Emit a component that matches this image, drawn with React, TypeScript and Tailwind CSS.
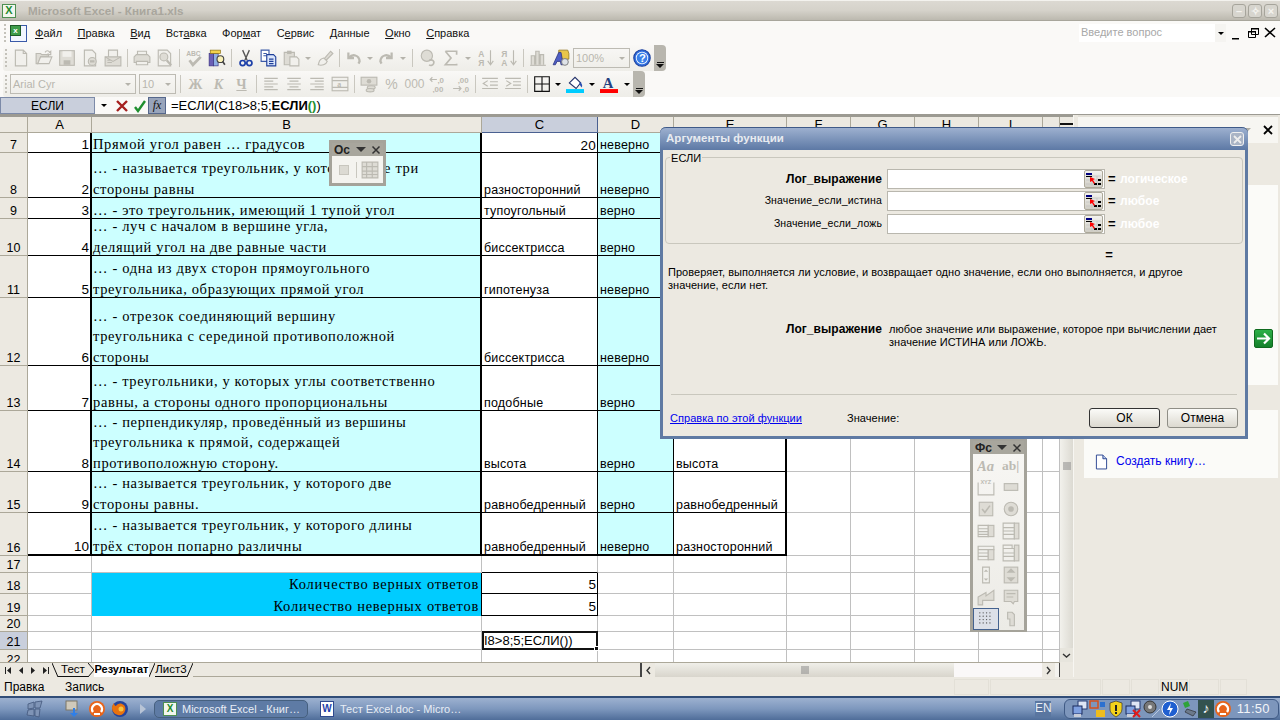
import type { ReactNode } from "react";

const G = "#bcbab2";
const F = "#dedcd5";
const L = "#f1f0ec";

const Ic = ({ children, w = 18 }: { children: ReactNode; w?: number }) => (
  <svg width={w} height={w} viewBox="0 0 16 16" shapeRendering="geometricPrecision">
    {children}
  </svg>
);

const icons: Record<string, ReactNode> = {
  new: (
    <>
      <path d="M3 1h7l3 3v11H3z" fill={L} stroke={G} />
      <path d="M10 1v3h3" fill="none" stroke={G} />
    </>
  ),
  open: (
    <>
      <path d="M1 13V4h4l1 1h6v2H5l-2.500 6z" fill={F} stroke={G} />
      <path d="M2.500 13h10L15 7H5z" fill={L} stroke={G} />
      <path d="M9 3c1-2 3-2 4 0l1-1v3h-3l1-1" fill="none" stroke={G} />
    </>
  ),
  save: (
    <>
      <rect x="1.500" y="1.500" width="13" height="13" fill={F} stroke={G} />
      <rect x="4" y="2" width="8" height="5" fill={L} />
      <rect x="5" y="10" width="6" height="4" fill={G} />
    </>
  ),
  perm: (
    <>
      <path d="M3 1h7l3 3v11H3z" fill={L} stroke={G} />
      <circle cx="10" cy="11" r="3.500" fill={F} stroke={G} />
      <rect x="8" y="10" width="4" height="2" fill={G} />
    </>
  ),
  mail: (
    <>
      <path d="M4 1h8v8H4z" fill={L} stroke={G} />
      <path d="M1 7h14v8H1z" fill={F} stroke={G} />
      <path d="M1 7l7 4 7-4M3 12h4M3 10h3" fill="none" stroke={G} />
    </>
  ),
  print: (
    <>
      <path d="M4 6V2h8v4" fill={L} stroke={G} />
      <path d="M1 7l2-2h10l2 2v5H1z" fill={F} stroke={G} />
      <path d="M3 11h10v3H3z" fill={L} stroke={G} />
    </>
  ),
  preview: (
    <>
      <path d="M2 1h8l3 3v11H2z" fill={L} stroke={G} />
      <circle cx="7" cy="7" r="3.500" fill={F} stroke={G} />
      <path d="M9.500 10l4 4.500" stroke={G} strokeWidth="2" />
    </>
  ),
  spell: (
    <>
      <text x="1" y="6" fontSize="6" fontWeight="700" fill={G} fontFamily="Liberation Sans">ABC</text>
      <path d="M4 10l3 4 7-7" fill="none" stroke={G} strokeWidth="2.500" />
    </>
  ),
  research: (
    <>
      <rect x="1" y="4" width="4" height="11" fill="#6a5fb5" stroke="#39317f" strokeWidth=".6" />
      <rect x="5" y="4" width="4" height="11" fill="#8fb0e4" stroke="#39317f" strokeWidth=".6" />
      <rect x="2" y="1" width="9" height="3" fill="#f2d34c" stroke="#8a6e10" strokeWidth=".6" />
      <circle cx="11" cy="9" r="3" fill="#f9f1b5" stroke="#444" />
      <path d="M13 11l2 3" stroke="#444" strokeWidth="1.500" />
    </>
  ),
  cut: (
    <>
      <path d="M5 1l4 9M11 1L7 10" stroke="#555" strokeWidth="1.200" />
      <circle cx="5" cy="12.500" r="2.300" fill="none" stroke="#1c3fa8" strokeWidth="1.500" />
      <circle cx="11" cy="12.500" r="2.300" fill="none" stroke="#1c3fa8" strokeWidth="1.500" />
    </>
  ),
  copy: (
    <>
      <path d="M1 1h7v10H1z" fill="#fff" stroke="#3c5aa8" />
      <path d="M3 4h3M3 6h3" stroke="#3c5aa8" />
      <path d="M6 5h6l2 2v8H6z" fill="#dbe6fb" stroke="#1f3f99" />
      <path d="M8 9h4M8 11h4M8 13h4" stroke="#1f3f99" />
    </>
  ),
  paste: (
    <>
      <path d="M2 3h9v11H2z" fill={F} stroke={G} />
      <rect x="4.500" y="1.500" width="4" height="3" fill={G} />
      <path d="M7 7h6l2 2v6H7z" fill={L} stroke={G} />
    </>
  ),
  painter: (
    <>
      <path d="M7 9l6-7 2 2-6 6z" fill={F} stroke={G} />
      <path d="M2 14c1-2 0-5 5-6l3 3c-1 3-5 4-8 3z" fill={L} stroke={G} />
    </>
  ),
  undo: <path d="M3 3v5h5M3.500 8c3-4 9-3 9.500 3l-1 2" fill="none" stroke={G} strokeWidth="2" />,
  redo: <path d="M13 3v5H8M12.500 8c-3-4-9-3-9.500 3l1 2" fill="none" stroke={G} strokeWidth="2" />,
  hyper: (
    <>
      <circle cx="7" cy="6" r="5" fill={F} stroke={G} />
      <path d="M9 10c3-1 5 1 4 3s-3 2-4 1" fill="none" stroke={G} strokeWidth="1.500" />
    </>
  ),
  sigma: <path d="M3 2h10v3M13 13v1H3l5-6-5-6" fill="none" stroke={G} strokeWidth="1.500" />,
  sortA: (
    <>
      <text x="1" y="7.500" fontSize="7.500" fontFamily="Liberation Sans" fontWeight="700" fill={G}>А</text>
      <text x="1" y="15" fontSize="7.500" fontFamily="Liberation Sans" fontWeight="700" fill={G}>Я</text>
      <path d="M12 1v12M9.500 10.500L12 14l2.500-3.500" fill="none" stroke={G} />
    </>
  ),
  sortZ: (
    <>
      <text x="1" y="7.500" fontSize="7.500" fontFamily="Liberation Sans" fontWeight="700" fill={G}>Я</text>
      <text x="1" y="15" fontSize="7.500" fontFamily="Liberation Sans" fontWeight="700" fill={G}>А</text>
      <path d="M12 1v12M9.500 10.500L12 14l2.500-3.500" fill="none" stroke={G} />
    </>
  ),
  chart: (
    <>
      <path d="M2 14V6h3v8M6 14V2h3v12M10 14V5h3v9" fill={F} stroke={G} />
      <path d="M1 14.500h14" stroke={G} />
    </>
  ),
  drawing: (
    <>
      <path d="M6 1h8l1 3v5H6z" fill="#e9c64a" stroke="#94761c" strokeWidth=".7" />
      <path d="M1 14L6 3h2l2 11H8l-.5-3H4.500L3 14z" fill="#4f5fc4" stroke="#2b337f" strokeWidth=".7" />
      <circle cx="11.500" cy="11.500" r="3" fill="#dfe3e8" stroke="#777" strokeWidth=".8" />
    </>
  ),
  help: (
    <>
      <circle cx="8" cy="8" r="7.300" fill="#2f6fe0" stroke="#1b3f9e" />
      <circle cx="8" cy="8" r="5.500" fill="#fff" />
      <circle cx="8" cy="8" r="4.800" fill="#3a80ea" />
      <text x="5.400" y="11.500" fontSize="10" fontWeight="700" fontFamily="Liberation Sans" fill="#fff">?</text>
    </>
  ),
  alignL: <path d="M2 3h12M2 5.500h8M2 8h12M2 10.500h8M2 13h12" stroke={G} strokeWidth="1.100" />,
  alignC: <path d="M2 3h12M4 5.500h8M2 8h12M4 10.500h8M2 13h12" stroke={G} strokeWidth="1.100" />,
  alignR: <path d="M2 3h12M6 5.500h8M2 8h12M6 10.500h8M2 13h12" stroke={G} strokeWidth="1.100" />,
  merge: (
    <>
      <rect x="1" y="2" width="14" height="12" fill={L} stroke={G} />
      <path d="M1 5h14M1 11h14" stroke={G} />
      <text x="5.500" y="10.500" fontSize="7" fontWeight="700" fontFamily="Liberation Serif" fill={G}>a</text>
    </>
  ),
  money: (
    <>
      <rect x="1" y="2" width="14" height="7" fill={F} stroke={G} />
      <circle cx="8" cy="5.500" r="2" fill={G} />
      <ellipse cx="10" cy="11" rx="3.500" ry="1.500" fill={F} stroke={G} />
      <ellipse cx="9" cy="13.500" rx="3.500" ry="1.500" fill={F} stroke={G} />
    </>
  ),
  incDec: (
    <>
      <text x="7.500" y="7" fontSize="7" fontWeight="700" fontFamily="Liberation Sans" fill={G}>,0</text>
      <text x="3" y="15" fontSize="7" fontWeight="700" fontFamily="Liberation Sans" fill={G}>,00</text>
      <path d="M7 4H1M3 2L1 4l2 2" fill="none" stroke={G} />
    </>
  ),
  decDec: (
    <>
      <text x="5" y="7" fontSize="7" fontWeight="700" fontFamily="Liberation Sans" fill={G}>,00</text>
      <text x="9.500" y="15" fontSize="7" fontWeight="700" fontFamily="Liberation Sans" fill={G}>,0</text>
      <path d="M1 12h7M6 10l2 2-2 2" fill="none" stroke={G} />
    </>
  ),
  indL: <path d="M1 3h14M8 6h7M8 9h7M1 12h14M6 5L2 7.500 6 10" fill="none" stroke={G} />,
  indR: <path d="M1 3h14M8 6h7M8 9h7M1 12h14M2 5l4 2.500L2 10" fill="none" stroke={G} />,
  border: <path d="M1.500 1.500h13v13h-13zM8 1.500v13M1.500 8h13" fill="none" stroke="#111" />,
  fill: (
    <>
      <path d="M3 7l5-5 5 5-4 5z" fill="#fff" stroke="#24336b" />
      <path d="M12 6c2 1 3 3 2 5-1-1-2-2-2-5z" fill="#2a4fb0" />
      <rect x="0" y="12.500" width="16" height="3.500" fill="#00ccff" />
    </>
  ),
  color: (
    <>
      <text x="2.500" y="11.500" fontSize="13" fontWeight="700" fontFamily="Liberation Serif" fill="#24407f">A</text>
      <rect x="0" y="12.500" width="16" height="3.500" fill="#ff0000" />
    </>
  ),
};

const Btn = ({ i, w = "w-[23px]" }: { i: string; w?: string }) => (
  <div className={`${w} h-full flex items-center justify-center shrink-0`}>
    <Ic>{icons[i]}</Ic>
  </div>
);

const Glyph = ({ t, cls }: { t: string; cls: string }) => (
  <div className={`w-[23px] h-full flex items-center justify-center shrink-0 text-[#bcbab2] ${cls}`}>{t}</div>
);

const Drop = ({ w = "w-[11px]", c = "border-t-[#b5b3ab]" }: { w?: string; c?: string }) => (
  <div className={`${w} h-full flex items-center justify-center shrink-0`}>
    <div className={`w-0 h-0 border-x-[3px] border-x-transparent border-t-[3px] ${c}`} />
  </div>
);

const Sep = ({ w = "w-[6px]" }: { w?: string }) => (
  <div className={`${w} h-full flex items-center justify-center shrink-0`}>
    <div className="w-px h-[18px] bg-[#c9c7bf]" />
  </div>
);

const Grip = () => (
  <div className="w-[6px] h-full flex flex-col items-center justify-center gap-[2px] shrink-0">
    {[0, 1, 2, 3, 4].map((k) => (
      <div key={k} className="w-[2px] h-[2px] bg-[#c4c2ba]" />
    ))}
  </div>
);

const Chevron = ({ w }: { w: string }) => (
  <div className={`${w} h-full bg-[#b8b6ae] rounded-r-[4px] flex flex-col items-center justify-end pb-[3px] gap-[1px] shrink-0`}>
    <div className="w-[7px] h-px bg-[#111]" />
    <div className="w-0 h-0 border-x-[4px] border-x-transparent border-t-[4px] border-t-[#111]" />
  </div>
);

const Combo = ({ w, t }: { w: string; t: string }) => (
  <div className={`${w} h-[20px] border border-[#bdbbb3] flex items-center pl-[2px] text-[11px] text-[#b8b6ae] shrink-0`}>
    <span className="flex-1">{t}</span>
    <Drop w="w-[14px]" />
  </div>
);

const menus: [string, string, string][] = [
  ["", "Ф", "айл"],
  ["", "П", "равка"],
  ["", "В", "ид"],
  ["Вст", "а", "вка"],
  ["Фор", "м", "ат"],
  ["С", "е", "рвис"],
  ["", "Д", "анные"],
  ["", "О", "кно"],
  ["", "С", "правка"],
];

const TitleBar = () => (
  <div className="h-[21px] shrink-0 flex items-center bg-gradient-to-b from-[#dcd9d2] via-[#d5d2ca] to-[#bcb9af] border-t border-[#f3f2ee] border-b-[#a8a69c] border-b">
    <div className="w-[14px] h-[14px] ml-[2px] bg-[#f2f6ee] border border-[#4e8f52] flex items-center justify-center text-[11px] font-bold text-[#1f8a2e] leading-none">
      X
    </div>
    <div className="ml-[12px] text-[11.700px] font-bold text-[#a9a69d]">Microsoft Excel - Книга1.xls</div>
    <div className="ml-auto mr-[2px] flex gap-[2px]">
      {["–", "✧", "×"].map((s) => (
        <div key={s} className="w-[14px] h-[14px] rounded-[3px] border border-[#a6a49b] bg-[#d7d5ce] text-[#f4f3ef] text-[11px] leading-[12px] text-center font-bold">
          {s}
        </div>
      ))}
    </div>
  </div>
);

const MenuBar = () => (
  <div className="h-[24px] shrink-0 flex items-center bg-[#faf9f7] text-[11px] text-[#111]">
    <div className="w-[10px] flex justify-center"><Grip /></div>
    <div className="w-[17px] h-[17px] bg-[#f2f6ff] border border-[#3a5aa8] relative">
      <div className="absolute left-[-1px] top-[-1px] w-[11px] h-[11px] bg-[#3f9c4a] border border-[#1e5a28] text-white text-[8px] font-bold leading-[9px] text-center">x</div>
    </div>
    <div className="ml-[8px] flex gap-[15.500px]">
      {menus.map(([a, u, b]) => (
        <span key={a + u + b}>
          {a}
          <u>{u}</u>
          {b}
        </span>
      ))}
    </div>
    <div className="ml-auto w-[136px] h-[18px] bg-white text-[11px] text-[#a8a8a8] pl-[2px] leading-[17px]">Введите вопрос</div>
    <div className="w-[11px] h-[18px] flex items-center justify-center bg-[#f5f4f1]">
      <div className="w-0 h-0 border-x-[3px] border-x-transparent border-t-[3px] border-t-black" />
    </div>
    <div className="w-[54px] flex items-center justify-around pr-[2px] pl-[4px]">
      <svg width="16" height="16" viewBox="0 0 16 16"><path d="M2 13h7v1.500H2z" fill="#000" /></svg>
      <svg width="16" height="16" viewBox="0 0 16 16"><path d="M5.500 3.500h7v6h-7zM2.500 6.500h7v6h-7z" fill="#faf9f7" stroke="#000" /><path d="M5 3h8v1.500H5zM2 6h8v1.500H2z" fill="#000" /></svg>
      <svg width="16" height="16" viewBox="0 0 16 16"><path d="M3 3l10 9M13 3L3 12" stroke="#000" strokeWidth="1.600" /></svg>
    </div>
  </div>
);

const ToolbarOne = () => (
  <div className="h-[26px] shrink-0 bg-[#faf9f7] flex pl-[3px]">
    <div className="flex items-center h-full bg-gradient-to-b from-[#f9f8f6] to-[#eeede8] rounded-l-[3px]">
      <Grip />
      <Btn i="new" />
      <Btn i="open" />
      <Btn i="save" />
      <Btn i="perm" />
      <Btn i="mail" />
      <Sep />
      <Btn i="print" />
      <Btn i="preview" />
      <Sep />
      <Btn i="spell" />
      <Btn i="research" />
      <Sep />
      <Btn i="cut" />
      <Btn i="copy" />
      <Btn i="paste" w="w-[22px]" />
      <Drop w="w-[11px]" />
      <Btn i="painter" />
      <Sep />
      <Btn i="undo" />
      <Drop w="w-[10px]" />
      <Btn i="redo" w="w-[22px]" />
      <Drop w="w-[11px]" />
      <Sep w="w-[8px]" />
      <Btn i="hyper" />
      <Btn i="sigma" />
      <Drop w="w-[12px]" />
      <Btn i="sortA" />
      <Btn i="sortZ" />
      <Sep />
      <Btn i="chart" />
      <Btn i="drawing" />
      <div className="w-px" />
      <Combo w="w-[57px]" t="100%" />
      <Btn i="help" />
      <div className="w-px" />
    </div>
    <div className="h-full flex items-stretch"><Chevron w="w-[12px]" /></div>
  </div>
);

const ToolbarTwo = () => (
  <div className="h-[26px] shrink-0 bg-[#faf9f7] flex pl-[3px]">
    <div className="flex items-center h-full bg-gradient-to-b from-[#f9f8f6] to-[#eeede8] rounded-l-[3px]">
      <Grip />
      <div className="w-px" />
      <Combo w="w-[126px]" t="Arial Cyr" />
      <div className="w-[3px]" />
      <Combo w="w-[37px]" t="10" />
      <Sep w="w-[8px]" />
      <Glyph t="Ж" cls="font-bold text-[14px] font-['Liberation_Serif']" />
      <Glyph t="К" cls="font-bold italic text-[14px] font-['Liberation_Serif']" />
      <Glyph t="Ч" cls="font-bold underline text-[14px] font-['Liberation_Serif']" />
      <Sep />
      <Btn i="alignL" />
      <Btn i="alignC" />
      <Btn i="alignR" />
      <Btn i="merge" />
      <Sep />
      <Btn i="money" />
      <Glyph t="%" cls="text-[14px]" />
      <Glyph t="000" cls="text-[12px]" />
      <Btn i="incDec" />
      <Btn i="decDec" />
      <Sep />
      <Btn i="indL" />
      <Btn i="indR" />
      <Sep />
      <Btn i="border" />
      <Drop w="w-[10px]" c="border-t-black" />
      <Btn i="fill" />
      <Drop w="w-[11px]" c="border-t-black" />
      <Btn i="color" />
      <Drop w="w-[13px]" c="border-t-black" />
    </div>
    <div className="h-full flex items-stretch"><Chevron w="w-[12px]" /></div>
  </div>
);

const FormulaBar = () => (
  <div className="h-[18px] shrink-0 flex items-center bg-white text-[13px] border-b border-[#9c9a92]">
    <div className="w-[95px] h-full bg-[#c9cfdc] border border-[#7c8aa8] text-center text-[12px] leading-[16px] text-black">ЕСЛИ</div>
    <div className="w-[17px] h-full flex items-center justify-center bg-[#faf9f7]">
      <div className="w-0 h-0 border-x-[3px] border-x-transparent border-t-[3px] border-t-black" />
    </div>
    <div className="w-[19px] h-full flex items-center justify-center bg-[#faf9f7]">
      <svg width="14" height="14" viewBox="0 0 14 14"><path d="M2 2l10 10M12 2L2 12" stroke="#a5201f" strokeWidth="2.400" /></svg>
    </div>
    <div className="w-[17px] h-full flex items-center justify-center bg-[#faf9f7]">
      <svg width="14" height="14" viewBox="0 0 14 14"><path d="M2 8l3 4 7-10" fill="none" stroke="#1f8f2f" strokeWidth="2.400" /></svg>
    </div>
    <div className="w-[18px] h-full bg-[#98a4bb] border border-[#55678c] text-center font-['Liberation_Serif'] italic text-[12px] leading-[15px] text-[#111]">fx</div>
    <div className="pl-[5px] text-[13px] leading-none text-black">
      =ЕСЛИ(C18&gt;8;5;<b>ЕСЛИ</b>
      <b className="text-[#1f8f2f]">()</b>)
    </div>
  </div>
);

const cols = "grid grid-rows-[minmax(0,1fr)] grid-cols-[28px_64px_390px_116px_76px_113px_64px_64px_64px_64px_17px]";
const sans = "font-['Liberation_Sans'] text-[12.500px] tracking-[0.2px]";
const serif = "font-['Liberation_Serif'] text-[14.500px] tracking-[0.65px]";
const thin = "border-r border-b border-[#c0c0c0]";

type Row = { n: number; h: string; a: string; b: string[]; c: string; d: string; e?: string };

const data: Row[] = [
  { n: 7, h: "h-[20px]", a: "1", b: ["Прямой угол равен … градусов"], c: "20", d: "неверно" },
  { n: 8, h: "h-[45px]", a: "2", b: ["… - называется треугольник, у которого все три", "стороны равны"], c: "разносторонний", d: "неверно" },
  { n: 9, h: "h-[21px]", a: "3", b: ["… - это треугольник, имеющий 1 тупой угол"], c: "тупоугольный", d: "верно" },
  { n: 10, h: "h-[37px]", a: "4", b: ["… - луч с началом в вершине угла,", "делящий угол на две равные части"], c: "биссектрисса", d: "верно" },
  { n: 11, h: "h-[42px]", a: "5", b: ["… - одна из двух сторон прямоугольного", "треугольника, образующих прямой угол"], c: "гипотенуза", d: "неверно" },
  { n: 12, h: "h-[68px]", a: "6", b: ["… - отрезок соединяющий вершину", "треугольника с серединой противоположной", "стороны"], c: "биссектрисса", d: "неверно" },
  { n: 13, h: "h-[45px]", a: "7", b: ["… - треугольники, у которых углы соответственно", "равны, а стороны одного пропорциональны"], c: "подобные", d: "верно" },
  { n: 14, h: "h-[61px]", a: "8", b: ["… - перпендикуляр, проведённый из вершины", "треугольника к прямой, содержащей", "противоположную сторону."], c: "высота", d: "верно", e: "высота" },
  { n: 15, h: "h-[41px]", a: "9", b: ["… - называется треугольник, у которого две", "стороны равны."], c: "равнобедренный", d: "верно", e: "равнобедренный" },
  { n: 16, h: "h-[43px]", a: "10", b: ["… - называется треугольник, у которого длины", "трёх сторон попарно различны"], c: "равнобедренный", d: "неверно", e: "разносторонний" },
];

const RowHead = ({ n, on }: { n: number; on?: boolean }) => (
  <div className={`flex items-end justify-center border-r border-b border-[#aca899] text-[12.500px] leading-[14px] font-['Liberation_Sans'] ${on ? "bg-[#c9cfdc]" : "bg-[#ece9e1]"}`}>{n}</div>
);

const Blanks = ({ n }: { n: number }) => (
  <>
    {Array.from({ length: n }).map((_, k) => (
      <div key={k} className={thin} />
    ))}
  </>
);

const Header = () => (
  <div className={`${cols} h-[18px] border-t-2 border-[#9c9a92] text-[13px] font-['Liberation_Sans'] text-center leading-[16px] bg-[#ece9e1]`}>
    {["", "A", "B", "C", "D", "E", "F", "G", "H", "I", ""].map((t, k) => (
      <div key={k} className={t === "C" ? "bg-[#c9cfdc] border-r border-b border-[#4a6090]" : "border-r border-b border-[#aca899]"}>
        {t}
      </div>
    ))}
  </div>
);

const DataRow = ({ r }: { r: Row }) => {
  const last = r.n === 16;
  const b = last ? "border-b-2 border-black" : "border-b border-black";
  return (
    <div className={`${cols} ${r.h}`}>
      <RowHead n={r.n} />
      <div className={`flex items-end justify-end pr-[1px] text-[13.500px] leading-[14px] font-['Liberation_Sans'] border-r-2 ${b}`}>{r.a}</div>
      <div className={`bg-[#ccffff] flex flex-col justify-end pl-[1px] leading-[20.500px] ${serif} border-r-2 ${b}`}>
        {r.b.map((t) => (
          <div key={t} className="whitespace-nowrap translate-y-[2px]">{t}</div>
        ))}
      </div>
      <div className={`flex items-end leading-[13px] pl-[2px] ${r.n === 7 ? "justify-end text-[13.500px] pr-[1px]" : ""} ${sans} border-r ${b}`}>{r.c}</div>
      <div className={`bg-[#ccffff] flex items-end leading-[13px] pl-[2px] ${sans} border-r ${b}`}>{r.d}</div>
      <div className={`flex items-end leading-[13px] pl-[2px] ${sans} border-r-2 ${b}`}>{r.e}</div>
      <Blanks n={5} />
    </div>
  );
};

const SummaryRow = ({ n, h, t }: { n: number; h: string; t: string }) => (
  <div className={`${cols} ${h}`}>
    <RowHead n={n} />
    <div className={thin} />
    <div className="bg-[#00ccff] border-r border-black flex items-end justify-end pr-[2px] leading-[19px] font-['Liberation_Serif'] text-[14.500px] tracking-[0.75px]">{t}</div>
    <div className="border-r border-b border-black flex items-end justify-end pr-[1px] text-[13.500px] font-['Liberation_Sans'] leading-[17px]">5</div>
    <Blanks n={7} />
  </div>
);

const EmptyRow = ({ n, h, black }: { n: number; h: string; black?: boolean }) => (
  <div className={`${cols} ${h}`}>
    <RowHead n={n} />
    <div className={thin} />
    <div className={thin} />
    <div className={black ? "border-r border-b border-[#c0c0c0] border-b-black" : thin} />
    <Blanks n={7} />
  </div>
);

const Sheet = () => (
  <div className="h-[547px] overflow-hidden shrink-0 bg-white text-black">
    <Header />
    {data.map((r) => (
      <DataRow key={r.n} r={r} />
    ))}
    <EmptyRow n={17} h="h-[17px]" black />
    <SummaryRow n={18} h="h-[21px]" t="Количество верных ответов" />
    <SummaryRow n={19} h="h-[22px]" t="Количество неверных ответов" />
    <EmptyRow n={20} h="h-[16px]" />
    <div className={`${cols} h-[18px]`}>
      <RowHead n={21} on />
      <div className={thin} />
      <div className={thin} />
      <div className="relative border-2 border-[#111] -mt-px flex items-end text-[13px] font-['Liberation_Sans'] leading-[15px] whitespace-nowrap">
        I8&gt;8;5;ЕСЛИ())
        <div className="absolute -right-[3px] -bottom-[3px] w-[5px] h-[5px] bg-[#111] border border-white" />
      </div>
      <Blanks n={7} />
    </div>
    <EmptyRow n={22} h="h-[18px]" />
  </div>
);

const Arrow = ({ d }: { d: string }) => (
  <svg width="9" height="9" viewBox="0 0 9 9"><path d={d} fill="#222" /></svg>
);

const TabBar = () => (
  <div className="h-[15px] shrink-0 flex items-stretch bg-[#ece9e1] border-t border-[#aca899] text-[11.500px] font-['Liberation_Sans'] text-black">
    <div className="w-[52px] flex items-center justify-around pl-[2px]">
      <Arrow d="M1 1h1v7H1zM7 1v7L3 4.500z" />
      <Arrow d="M7 1v7L3 4.500z" />
      <Arrow d="M2 1v7l4-3.500z" />
      <Arrow d="M2 1v7l4-3.500zM7 1h1v7H7z" />
    </div>
    <svg width="6" height="14" viewBox="0 0 6 14"><path d="M0 0l6 14" stroke="#111" /></svg>
    <div className="w-[30px] text-center leading-[13px] border-b border-[#111]">Тест</div>
    <svg width="6" height="14" viewBox="0 0 6 14"><path d="M0 0l6 7-6 7" stroke="#111" fill="none" /></svg>
    <div className="w-[55px] text-center bg-white font-bold text-[11px] leading-[13px] whitespace-nowrap">Результат</div>
    <svg width="6" height="14" viewBox="0 0 6 14"><path d="M6 0L0 14" stroke="#111" /></svg>
    <div className="w-[32px] text-center leading-[13px] border-b border-[#111]">Лист3</div>
    <svg width="6" height="14" viewBox="0 0 6 14"><path d="M6 0L0 14" stroke="#111" /></svg>
    <div className="w-[447px] border-b border-[#aca899]" />
    <div className="w-[2px] bg-[#444]" />
    <div className="w-[13px] bg-[#ece9e1] flex items-center justify-center">
      <svg width="7" height="9" viewBox="0 0 7 9"><path d="M5 1L2 4.500 5 8" fill="none" stroke="#333" strokeWidth="1.400" /></svg>
    </div>
    <div className="w-[299px] bg-gradient-to-b from-[#f0efe9] to-[#d8d5cc] flex items-center justify-center">
      <svg width="10" height="10" viewBox="0 0 10 10"><path d="M2 1v8M4 1v8M6 1v8M8 1v8" stroke="#888" /></svg>
    </div>
    <div className="flex-1 bg-[#faf8f8]" />
    <div className="w-[13px] bg-[#ece9e1] flex items-center justify-center">
      <svg width="7" height="9" viewBox="0 0 7 9"><path d="M2 1l3 3.500L2 8" fill="none" stroke="#333" strokeWidth="1.400" /></svg>
    </div>
    <div className="w-[5px] bg-[#f4f3ef] border-r border-[#444]" />
  </div>
);

const VScroll = () => (
  <div className="w-[13px] shrink-0 flex flex-col bg-[#ece9e1] border-t-2 border-t-[#9c9a92]">
    <div className="h-[14px] bg-[#ece9e1] flex flex-col justify-center">
      <div className="h-[2px] bg-[#111]" />
    </div>
    <div className="h-[153px] bg-[#f6f5f2]" />
    <div className="h-[364px] flex items-center justify-center bg-gradient-to-r from-[#f2f1ec] to-[#dcdad2]">
      <svg width="10" height="10" viewBox="0 0 10 10"><path d="M1 2h8M1 4h8M1 6h8M1 8h8" stroke="#888" /></svg>
    </div>
    <div className="h-[14px] bg-[#e7e5dd] flex items-center justify-center">
      <svg width="9" height="7" viewBox="0 0 9 7"><path d="M1 2l3.500 3L8 2" fill="none" stroke="#333" strokeWidth="1.400" /></svg>
    </div>
    <div className="flex-1 bg-[#ece9e1]" />
  </div>
);

const TaskPane = () => (
  <div className="flex-1 flex flex-col bg-[#ece9e1] pl-[4px] pr-[2px] pb-[2px] text-[12px] font-['Liberation_Sans'] border-l border-[#f7f6f2]">
    <div className="h-[2px] bg-[#e3e0d8]" />
    <div className="h-[26px] bg-[#f7f6f2] flex items-center justify-end gap-[10px] pr-[3px]">
      <div className="w-0 h-0 border-x-[5px] border-x-transparent border-t-[5px] border-t-[#b0aea6]" />
      <svg width="14" height="14" viewBox="0 0 14 14"><path d="M3 3l8 8M11 3l-8 8" stroke="#000" strokeWidth="1.800" /></svg>
    </div>
    <div className="h-[42px] bg-[#ece9e1]" />
    <div className="ml-[6px] h-[200px] bg-[#fbfbf8] flex items-center justify-end pr-[5px] pt-[106px]">
      <div className="w-[19px] h-[19px] rounded-[2px] bg-gradient-to-b from-[#2db048] to-[#13802a] border border-[#0f6a1f] flex items-center justify-center">
        <svg width="15" height="13" viewBox="0 0 15 13"><path d="M1 6.500h11M8 1.500l5 5-5 5" fill="none" stroke="#fff" strokeWidth="2.200" /></svg>
      </div>
    </div>
    <div className="h-[25px] bg-[#ece9e1] ml-[6px]" />
    <div className="ml-[6px] h-[68px] bg-[#fbfbf8] flex items-end pl-[11px] pb-[8px] gap-[8px] text-[#0000ee]">
      <svg width="13" height="16" viewBox="0 0 14 17"><path d="M1.500 1h7l4 4v11h-11z" fill="#fff" stroke="#26418f" /><path d="M8.500 1v4h4" fill="#b9c8e8" stroke="#26418f" /></svg>
      <span>Создать книгу…</span>
    </div>
    <div className="flex-1" />
  </div>
);

const Main = () => (
  <div className="flex-1 min-h-0 flex">
    <div className="w-[1060px] shrink-0 flex flex-col">
      <Sheet />
      <TabBar />
    </div>
    <VScroll />
    <TaskPane />
  </div>
);

const FloatTitle = ({ t }: { t: string }) => (
  <div className="h-[13px] bg-[#a8a69d] flex items-center justify-between px-[2px] font-bold text-[12px] font-['Liberation_Sans'] text-[#222]">
    <span>{t}</span>
    <div className="w-0 h-0 border-x-[5px] border-x-transparent border-t-[5px] border-t-[#333]" />
    <svg width="10" height="10" viewBox="0 0 10 10"><path d="M1.500 1.500l7 7M8.500 1.500l-7 7" stroke="#333" strokeWidth="1.500" /></svg>
  </div>
);

const OsToolbar = () => (
  <div className="absolute left-[329px] top-[140px] w-[57px] h-[46px] border-[3px] border-[#a5a39a] bg-[#f4f3ef] z-10">
    <FloatTitle t="Ос" />
    <div className="flex items-center h-[27px]">
      <div className="w-[24px] flex justify-center"><div className="w-[10px] h-[10px] bg-[#dcdad3] border border-[#c8c6be]" /></div>
      <div className="w-px h-[16px] bg-[#c9c7bf]" />
      <div className="flex-1 flex justify-center">
        <Ic>
          <path d="M1 1h14v14H1zM1 5h14M1 9h14M1 12h14M5 1v14M10 1v14" fill={F} stroke={G} />
        </Ic>
      </div>
    </div>
  </div>
);

const formIcons: ReactNode[] = [
  <text key="a" x="0" y="13" fontSize="13" fontStyle="italic" fontWeight="700" fontFamily="Liberation Serif" fill={G}>Aa</text>,
  <text key="b" x="0" y="12" fontSize="12" fontFamily="Liberation Serif" fontWeight="700" fill={G}>ab|</text>,
  <>
    <path d="M1 4v11h14V4" fill="none" stroke={G} />
    <text x="3" y="5" fontSize="5" fontWeight="700" fontFamily="Liberation Sans" fill={G}>XYZ</text>
  </>,
  <rect key="c" x="2" y="5" width="12" height="6" fill={F} stroke={G} />,
  <>
    <rect x="2" y="2" width="12" height="12" fill={F} stroke={G} />
    <path d="M4.500 8l2.500 3 4.500-6" fill="none" stroke={G} strokeWidth="1.400" />
  </>,
  <>
    <circle cx="8" cy="8" r="6" fill={F} stroke={G} />
    <circle cx="8" cy="8" r="2.500" fill={G} />
  </>,
  <>
    <path d="M1 3h9v10H1zM1 6h9M1 8.500h9M1 11h9" fill={L} stroke={G} />
    <rect x="10" y="3" width="5" height="10" fill={F} stroke={G} />
  </>,
  <>
    <path d="M1 1h10v14H1zM1 5h10M1 8h10M1 11h10" fill={L} stroke={G} />
    <rect x="11" y="1" width="4" height="14" fill={F} stroke={G} />
  </>,
  <>
    <path d="M1 2h14v3H1zM1 5h9v9H1zM1 8h9M1 11h9" fill={L} stroke={G} />
    <rect x="10" y="5" width="5" height="9" fill={F} stroke={G} />
  </>,
  <>
    <path d="M1 1h8v3H1zM1 4h10v11H1zM1 8h10M1 11h10" fill={L} stroke={G} />
    <rect x="11" y="1" width="4" height="14" fill={F} stroke={G} />
  </>,
  <>
    <path d="M5 1h6v14H5z" fill={L} stroke={G} />
    <path d="M8 3l2 2H6zM8 13l2-2H6z" fill={G} />
  </>,
  <>
    <rect x="2" y="1" width="12" height="14" fill={F} stroke={G} />
    <path d="M8 2l4 4H4zM8 14l4-4H4z" fill={G} />
  </>,
  <>
    <path d="M1 8l7-4v3l7-5v9H5v4H1z" fill={F} stroke={G} />
  </>,
  <>
    <path d="M2 2h12v10h-3l-1 2-2-2H2z" fill={F} stroke={G} />
    <path d="M4 5h8M4 8h6" stroke={G} />
  </>,
  <path key="g" d="M2.500 2.500h.01M5.500 2.500h.01M8.500 2.500h.01M11.500 2.500h.01M2.500 5.500h.01M5.500 5.500h.01M8.500 5.500h.01M11.500 5.500h.01M2.500 8.500h.01M5.500 8.500h.01M8.500 8.500h.01M11.500 8.500h.01M2.500 11.500h.01M5.500 11.500h.01M8.500 11.500h.01M11.500 11.500h.01" stroke="#555" strokeWidth="1.200" strokeLinecap="round" />,
  <path key="h" d="M5 2h4l2 2v10H7v-6H5z" fill={F} stroke={G} />,
];

const FormsToolbar = () => (
  <div className="absolute left-[970px] top-[438px] w-[57px] h-[194px] border-[3px] border-[#a5a39a] bg-[#f4f3ef] z-10">
    <FloatTitle t="Фс" />
    <div className="grid grid-cols-2 auto-rows-[22px] bg-gradient-to-b from-[#f7f6f3] to-[#ecebe6]">
      {formIcons.map((ic, k) => (
        <div key={k} className={`flex items-center justify-center ${k === 14 ? "border border-[#44628f] bg-[#dce0e8]" : ""}`}>
          <Ic>{ic}</Ic>
        </div>
      ))}
    </div>
  </div>
);

const RefIcon = () => (
  <div className="w-[19px] h-[18px] rounded-[2px] bg-gradient-to-b from-[#f4f3ef] to-[#cfcdc4] border border-[#aca899] ml-auto mr-[1px]">
    <svg width="17" height="16" viewBox="0 0 17 16">
      <path d="M1 2h6v2H1z" fill="#000080" />
      <path d="M1 5h15M1 9h15M1 13h15M7 5v10M12 5v10" stroke="#c0c0c0" strokeWidth=".7" />
      <path d="M1 5h6v1H1z" fill="#000" />
      <path d="M9 12h3v2H9zM13 12h3v2h-3zM13 8h3v2h-3z" fill="#000" />
      <path d="M5 6l5 2-2 1 2 3-1 1-2-3-2 1z" fill="#f00" />
    </svg>
  </div>
);

const ArgRow = ({ label, val, bold, h }: { label: string; val: string; bold?: boolean; h: string }) => (
  <div className={`flex items-center ${h}`}>
    <div className={`w-[221px] text-right pr-[5px] ${bold ? "font-bold text-[12px]" : "text-[10.500px] tracking-[0.13px]"}`}>{label}</div>
    <div className="w-[218px] h-[20px] bg-white border border-[#b9b7ae] flex">
      <RefIcon />
    </div>
    <div className="ml-[3px] w-[12px] text-[13px] font-bold">=</div>
    <div className="font-bold text-white text-[12px]">{val}</div>
  </div>
);

const Dialog = () => (
  <div className="absolute left-[660px] top-[127px] w-[588px] h-[312px] z-20 rounded-t-[6px] border-[3px] border-t-0 border-[#5f7aa3] bg-[#ece9e1] text-[11px] tracking-[0.05px] font-['Liberation_Sans'] text-black flex flex-col">
    <div className="-mx-[3px] h-[23px] shrink-0 rounded-t-[6px] bg-gradient-to-b from-[#9db0cf] to-[#5d79a5] border-t border-[#3f5a88] flex items-center pl-[6px] pr-[4px]">
      <span className="font-bold text-[11.500px] text-[#e8ebf0] flex-1">Аргументы функции</span>
      <div className="w-[14px] h-[14px] rounded-[3px] border border-[#f0f0f0] bg-[#aab4c5] flex items-center justify-center">
        <svg width="9" height="9" viewBox="0 0 9 9"><path d="M1 1l7 7M8 1L1 8" stroke="#eee" strokeWidth="1.800" /></svg>
      </div>
    </div>
    <div className="relative mx-[2px] mt-[7px] h-[87px] shrink-0 rounded-[4px] border border-[#c9c7bd] pt-[10px]">
      <span className="absolute left-[4px] -top-[6px] bg-[#ece9e1] px-[1px] leading-[13px]">ЕСЛИ</span>
      <ArgRow label="Лог_выражение" val="логическое" bold h="h-[22px]" />
      <ArgRow label="Значение_если_истина" val="любое" h="h-[22px]" />
      <ArgRow label="Значение_если_ложь" val="любое" h="h-[23px]" />
    </div>
    <div className="h-[22px] shrink-0 text-right pr-[132px] pt-[2px] text-[13px] font-bold leading-[18px]">=</div>
    <div className="pl-[5px] leading-[13px] h-[46px] shrink-0 whitespace-nowrap">
      <div>Проверяет, выполняется ли условие, и возвращает одно значение, если оно выполняется, и другое</div>
      <div>значение, если нет.</div>
    </div>
    <div className="flex h-[82px] shrink-0 leading-[13px] pt-[11px]">
      <div className="w-[219px] text-right font-bold text-[12px]">Лог_выражение</div>
      <div className="ml-[7px] whitespace-nowrap">
        <div>любое значение или выражение, которое при вычислении дает</div>
        <div>значение ИСТИНА или ЛОЖЬ.</div>
      </div>
    </div>
    <div className="mx-[8px] h-px bg-[#c9c7bd] shrink-0" />
    <div className="flex items-center pl-[7px] pt-[13px]">
      <a className="w-[177px] text-[#0000ee] underline">Справка по этой функции</a>
      <span className="flex-1">Значение:</span>
      <div className="w-[71px] h-[20px] rounded-[3px] border border-[#333] bg-gradient-to-b from-[#fbfbf8] to-[#dcd9d0] text-center leading-[18px] text-[12px]">ОК</div>
      <div className="ml-[7px] mr-[7px] w-[71px] h-[20px] rounded-[3px] border border-[#8f8e86] bg-gradient-to-b from-[#fbfbf8] to-[#dcd9d0] text-center leading-[18px] text-[12px]">Отмена</div>
    </div>
  </div>
);

const StatusBar = () => (
  <div className="h-[19px] shrink-0 bg-[#ece9e1] flex items-center text-[12px] font-['Liberation_Sans'] text-black pl-[4px]">
    <span className="w-[61px]">Правка</span>
    <span className="w-[889px]">Запись</span>
    {["w-[35px]", "w-[111px]", "w-[28px]", "w-[28px]", "w-[28px]", "w-[30px]", "w-[27px]"].map((w, k) => (
      <div key={k} className={`${w} h-[16px] mr-px border border-[#e3e0d7] text-center leading-[14px]`}>
        {k === 4 ? "NUM" : ""}
      </div>
    ))}
  </div>
);

const OrangeO = () => (
  <svg width="18" height="18" viewBox="0 0 18 18">
    <circle cx="9" cy="9" r="8" fill="#e8641a" />
    <path d="M5 12a5 5 0 1 1 8 0" fill="none" stroke="#fff" strokeWidth="2.400" />
    <path d="M6 14h6" stroke="#fff" strokeWidth="2" />
  </svg>
);

const Firefox = () => (
  <svg width="18" height="18" viewBox="0 0 18 18">
    <circle cx="9" cy="9" r="8" fill="#23449c" />
    <path d="M3 3c0 2 1 3 2 3 1-2 4-3 6-2 3 1 4 4 3 7-1 3-4 5-7 4-4-1-6-4-6-7 0-2 1-4 2-5z" fill="#e8720f" />
    <circle cx="10" cy="9" r="2.500" fill="#f5c542" />
  </svg>
);

const Shield = () => (
  <svg width="16" height="18" viewBox="0 0 16 18"><path d="M8 1l6 2v6c0 4-3 6-6 8-3-2-6-4-6-8V3z" fill="#f3d21b" stroke="#333" strokeWidth=".7" /><path d="M7 5h2v6H7zM7 12h2v2H7z" fill="#222" /></svg>
);

const Monitor = ({ x }: { x?: boolean }) => (
  <svg width="18" height="18" viewBox="0 0 18 18">
    <rect x="7" y="1" width="9" height="8" fill="#dfe6f5" stroke="#273a73" />
    <rect x="2" y="6" width="9" height="8" fill="#7fa0e0" stroke="#1a2a5e" />
    <rect x="3" y="14" width="7" height="3" fill="#c7ccd8" />
    {x && <path d="M9 10l7 7M16 10l-7 7" stroke="#e01b1b" strokeWidth="2" />}
  </svg>
);

const Taskbar = () => (
  <div className="h-[24px] shrink-0 flex items-center bg-gradient-to-b from-[#9db1d0] via-[#7d97bd] to-[#4f6d99] border-t-2 border-[#314d78] text-[11px] font-['Liberation_Sans'] text-[#e8edf5]">
    <div className="w-[64px] flex justify-end pr-[20px]">
      <svg width="18" height="18" viewBox="0 0 18 18">
        <path d="M2 4l6-2v6l-6 1zM9 2l7-1-2 7H9zM2 10l6-1v7l-7-1zM9 9h5l-1 8-4-1z" fill="#7f94b6" stroke="#44587c" strokeWidth=".8" />
      </svg>
    </div>
    <div className="w-[18px] flex justify-center">
      <svg width="18" height="18" viewBox="0 0 18 18"><rect x="2" y="1" width="11" height="9" fill="#cfc9bb" stroke="#7c7667" /><path d="M9 8v5H6l4 4 4-4h-3V8z" fill="#2f7fe8" /></svg>
    </div>
    <div className="w-[23px] ml-[3px] flex justify-center"><OrangeO /></div>
    <div className="w-[23px] flex justify-center"><Firefox /></div>
    <div className="w-[23px] flex justify-center">
      <div className="w-0 h-0 border-y-[5px] border-y-transparent border-l-[6px] border-l-[#b8c4d6]" />
    </div>
    <div className="w-[154px] h-[18px] rounded-[5px] border border-[#46607f] bg-[#5e7ba5] flex items-center pl-[8px] gap-[5px] whitespace-nowrap">
      <div className="w-[14px] h-[14px] bg-[#f2f6ee] border border-[#4e8f52] text-[10px] font-bold text-[#1f8a2e] leading-[12px] text-center">X</div>
      <span>Microsoft Excel - Книг…</span>
    </div>
    <div className="w-[166px] pl-[12px] flex items-center gap-[6px] whitespace-nowrap">
      <div className="w-[14px] h-[16px] bg-white border border-[#304a8f] text-[10px] font-bold text-[#1f3fa8] leading-[13px] text-center">W</div>
      <span>Тест Excel.doc - Micro…</span>
    </div>
    <div className="ml-auto w-[16px] h-[16px] bg-[#5a76a0] text-center leading-[15px] mr-[13px] text-[12px]">EN</div>
    <div className="w-[215px] h-[20px] mr-[1px] rounded-[6px] border border-[#3f5a85] bg-[#7d96bc] flex items-center justify-between pl-[6px] pr-[8px]">
      <Monitor />
      <svg width="18" height="18" viewBox="0 0 18 18"><path d="M1 1h8v7H1z" fill="none" stroke="#d5501a" strokeWidth="1.500" /><path d="M11 2h5v5h-5z" fill="#2c70d0" /><path d="M7 10h9v7H7z" fill="#eebd1e" /></svg>
      <Shield />
      <Monitor x />
      <svg width="18" height="18" viewBox="0 0 18 18"><circle cx="7" cy="7" r="6" fill="#777" stroke="#333" /><circle cx="7" cy="7" r="2" fill="#ddd" /><path d="M9 17l8-8" stroke="#b8c8e0" /></svg>
      <svg width="18" height="18" viewBox="0 0 18 18"><circle cx="9" cy="9" r="8" fill="#1f5fd0" stroke="#fff" /><path d="M10 3l-4 7h3l-1 5 4-7H9z" fill="#fff" /></svg>
      <svg width="18" height="18" viewBox="0 0 18 18"><path d="M3 3l5-2 2 5-5 2z" fill="#2fa33a" /><path d="M7 9l9 3-3 4-8-4z" fill="#6c7a8c" stroke="#222" strokeWidth=".6" /></svg>
      <div className="w-[16px] h-[18px] bg-[#33524f] text-white text-[14px] leading-[17px] text-center">♪</div>
      <OrangeO />
      <span className="ml-[4px] text-[13px] tracking-[0.3px] text-[#f2f4f8]">11:50</span>
    </div>
  </div>
);

export default function App() {
  return (
    <div className="relative w-[1280px] h-[720px] overflow-hidden flex flex-col bg-[#ece9e1] font-['Liberation_Sans',sans-serif]">
      <TitleBar />
      <MenuBar />
      <ToolbarOne />
      <ToolbarTwo />
      <FormulaBar />
      <Main />
      <StatusBar />
      <Taskbar />
      <OsToolbar />
      <FormsToolbar />
      <Dialog />
    </div>
  );
}
